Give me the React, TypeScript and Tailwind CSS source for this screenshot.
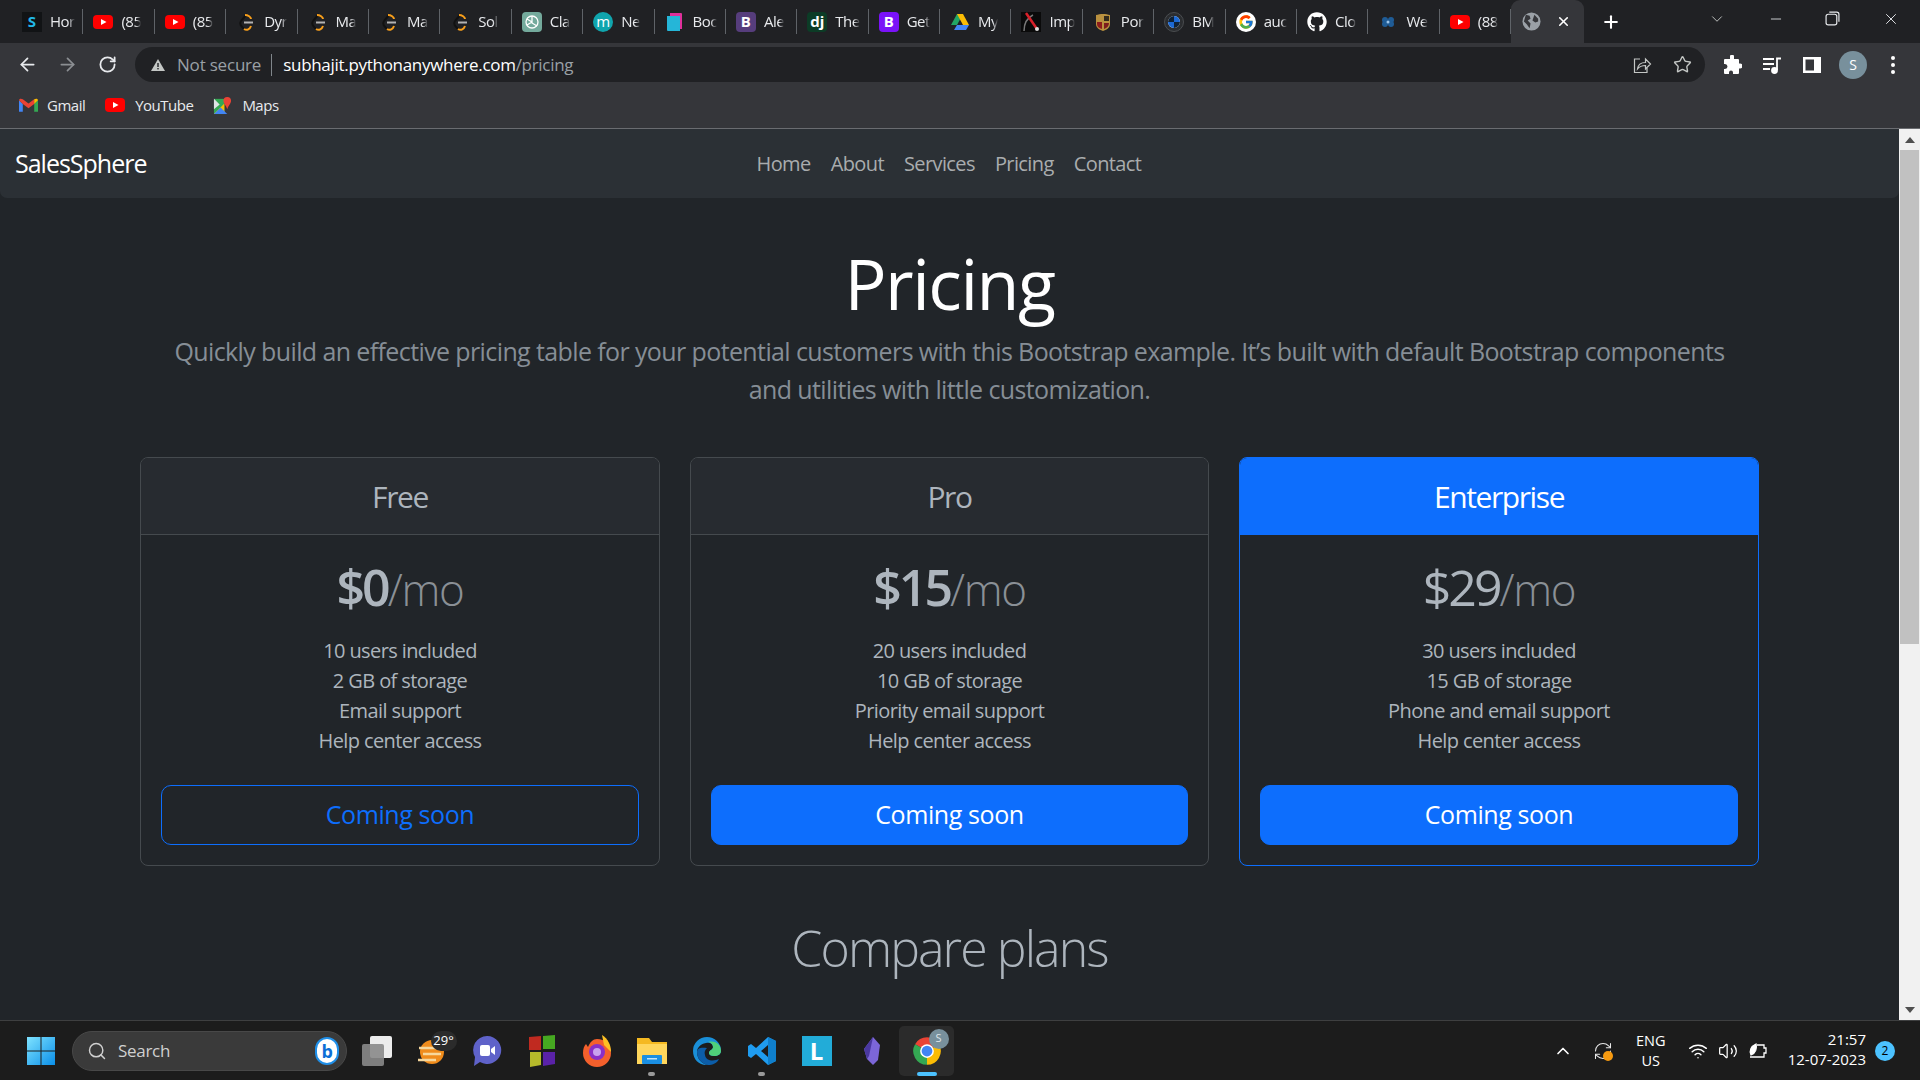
import React from 'react';
import { ArrowLeft, ArrowRight, ChevronDown, ChevronUp, Minus, Plus, RefreshCw, RotateCw, Search, Star, Volume2, Wifi, X } from 'lucide-react';
import { FaGithub } from 'react-icons/fa';
import { FcGoogle } from 'react-icons/fc';

function YouTubeIcon() {
  return (
    <svg viewBox="0 0 20 20" className="w-5 h-5 shrink-0">
      <rect x="0" y="3" width="20" height="14" rx="4" fill="#ff0000" />
      <path d="M8 7l5.500 3L8 13z" fill="#fff" />
    </svg>
  );
}

function CodeIcon() {
  return (
    <svg viewBox="0 0 20 20" fill="none" className="w-5 h-5 shrink-0">
      <path d="M11 2L5 9" stroke="#111" strokeWidth="2" />
      <path d="M5 9c-2 3 0 5 3 8" stroke="#111" strokeWidth="2" />
      <path d="M9 3c3 0 6 2 6 4" stroke="#f89f1b" strokeWidth="2" />
      <path d="M8 17c3 2 6 0 7-3" stroke="#f89f1b" strokeWidth="2" />
      <path d="M8 10.500h9" stroke="#b3b3b3" strokeWidth="2" />
    </svg>
  );
}

function LetterIcon({ letter, className }: { letter: string; className: string }) {
  return (
    <span className={`w-5 h-5 shrink-0 flex items-center justify-center font-bold text-[15px] leading-none ${className}`}>
      {letter}
    </span>
  );
}

const tabs: { icon: React.ReactNode; title: string }[] = [
  { icon: <LetterIcon letter="S" className="bg-[#111315] text-[#22b8e8] rounded-none" />, title: 'Hor' },
  { icon: <YouTubeIcon />, title: '(85' },
  { icon: <YouTubeIcon />, title: '(85' },
  { icon: <CodeIcon />, title: 'Dyr' },
  { icon: <CodeIcon />, title: 'Ma' },
  { icon: <CodeIcon />, title: 'Ma' },
  { icon: <CodeIcon />, title: 'Sol' },
  {
    icon: (
      <span className="w-5 h-5 shrink-0 rounded bg-[#74aa9c] flex items-center justify-center">
        <svg viewBox="0 0 16 16" fill="none" stroke="#fff" strokeWidth="1.300" className="w-4 h-4">
          <circle cx="8" cy="8" r="6" />
          <path d="M8 2v7l5 3M3 5l5 3M3 11l5-3" />
        </svg>
      </span>
    ),
    title: 'Cla',
  },
  { icon: <LetterIcon letter="m" className="bg-[#10a5ad] text-white rounded-full font-normal" />, title: 'Ne' },
  {
    icon: (
      <svg viewBox="0 0 20 20" className="w-5 h-5 shrink-0">
        <path d="M5 1h11a1 1 0 0 1 1 1v15H5z" fill="#e0309b" />
        <path d="M2 4h13v15H3a1 1 0 0 1-1-1z" fill="#25b6d8" />
      </svg>
    ),
    title: 'Boc',
  },
  { icon: <LetterIcon letter="B" className="bg-[#563d7c] text-white rounded" />, title: 'Ale' },
  { icon: <LetterIcon letter="dj" className="bg-[#0c3c26] text-white rounded-sm" />, title: 'The' },
  { icon: <LetterIcon letter="B" className="bg-[#7a12f8] text-white rounded" />, title: 'Get' },
  {
    icon: (
      <svg viewBox="0 0 20 20" className="w-5 h-5 shrink-0">
        <path d="M7 2h6L7 13H1z" fill="#22a565" />
        <path d="M13 2l6 11h-6L7 2z" fill="#fbbc04" />
        <path d="M4 18l3-5h12l-3 5z" fill="#4285f4" />
      </svg>
    ),
    title: 'My',
  },
  {
    icon: (
      <svg viewBox="0 0 20 20" className="w-5 h-5 shrink-0">
        <rect width="20" height="20" fill="#0a0a0a" />
        <path d="M3 19c0-8 3-13 9-16" stroke="#777" strokeWidth="1.500" fill="none" />
        <path d="M5 1l11 16" stroke="#d8202a" strokeWidth="2.500" />
        <circle cx="16" cy="17" r="2" fill="#ddd" />
      </svg>
    ),
    title: 'Imp',
  },
  {
    icon: (
      <svg viewBox="0 0 20 20" className="w-5 h-5 shrink-0">
        <path d="M3 3c4-1.500 10-1.500 14 0v9c0 4-4 6-7 7-3-1-7-3-7-7z" fill="#b9913f" />
        <path d="M4 10h5v7c-3-1-5-2-5-5z" fill="#8e1c1c" />
        <path d="M11 4h5v5h-5z" fill="#332a1c" />
        <path d="M11 11h5c0 3-2 5-5 6z" fill="#7c1d1d" />
      </svg>
    ),
    title: 'Por',
  },
  {
    icon: (
      <svg viewBox="0 0 20 20" className="w-5 h-5 shrink-0">
        <circle cx="10" cy="10" r="9.500" fill="#2b2d30" stroke="#4a4d50" />
        <circle cx="10" cy="10" r="6" fill="#fff" />
        <path d="M10 4a6 6 0 0 1 6 6h-6zM10 10v6a6 6 0 0 1-6-6z" fill="#1c69d4" />
        <path d="M10 4a6 6 0 0 0-6 6h6zM10 10v6a6 6 0 0 0 6-6z" fill="#0f2238" />
      </svg>
    ),
    title: 'BM',
  },
  { icon: <span className="w-5 h-5 shrink-0 rounded-full bg-white flex items-center justify-center"><FcGoogle className="w-4 h-4" /></span>, title: 'auc' },
  { icon: <FaGithub className="w-5 h-5 shrink-0 text-white" />, title: 'Clo' },
  {
    icon: (
      <svg viewBox="0 0 20 20" className="w-5 h-5 shrink-0" fill="#1f5c96">
        <circle cx="7" cy="8" r="3" />
        <circle cx="13" cy="8" r="3" />
        <circle cx="7" cy="12" r="3" />
        <circle cx="13" cy="12" r="3" />
        <circle cx="10" cy="10" r="1.500" fill="#9cc4e8" />
      </svg>
    ),
    title: 'We',
  },
  { icon: <YouTubeIcon />, title: '(88' },
];

function GlobeIcon() {
  return (
    <svg viewBox="0 0 20 20" className="w-[19px] h-[19px] shrink-0">
      <circle cx="10" cy="10" r="9.500" fill="#9aa0a6" />
      <path d="M4 3l4 1 1 3-3 2 3 3-1 5-3-4-3-3zM13 3l4 4v3l-3 1-3-2 1-3z" fill="#35363a" />
    </svg>
  );
}

function TabStrip() {
  return (
    <div className="h-[43px] bg-[#202124] flex items-end pl-3 shrink-0">
      {tabs.map((tab, i) => (
        <div key={i} className="w-[71.400px] h-[43px] flex items-center pl-[10px] relative">
          {tab.icon}
          <span className="ml-[8px] whitespace-nowrap text-[15px] text-[#e8eaed] tracking-[-0.5px] [mask-image:linear-gradient(to_right,black_75%,transparent)]">{tab.title}</span>
          <span className="absolute right-0 top-[9px] h-[25px] w-px bg-[#5f6368]" />
        </div>
      ))}
      <div className="w-[73px] h-[43px] bg-[#35363a] rounded-t-[9px] flex items-center pl-[11px]">
        <GlobeIcon />
        <X className="w-[15px] h-[15px] ml-[15px] text-white" strokeWidth={2.500} />
      </div>
      <div className="h-[43px] flex items-center ml-[17px]">
        <Plus className="w-5 h-5 text-white" strokeWidth={2.500} />
      </div>
      <div className="flex-1 h-[43px] flex items-start justify-end">
        <ChevronDown className="w-[18px] h-[18px] text-[#c4c7c5] mt-[10px] mr-[42px]" strokeWidth={1.250} />
        <Minus className="w-[16px] h-[16px] text-[#e8eaed] mt-[11px] mr-[41px]" strokeWidth={1.250} />
        <svg viewBox="0 0 14 14" fill="none" stroke="#e8eaed" strokeWidth="1.100" className="w-[15px] h-[15px] mt-[11px] mr-[42px]">
          <rect x="1" y="3" width="10" height="10" rx="2" />
          <path d="M4 1h7a2 2 0 0 1 2 2v7" />
        </svg>
        <X className="w-[18px] h-[18px] text-[#e8eaed] mt-[10px] mr-[20px]" strokeWidth={1.250} />
      </div>
    </div>
  );
}

function Toolbar() {
  return (
    <div className="h-[43px] bg-[#35363a] flex items-center shrink-0 text-[#e8eaed]">
      <ArrowLeft className="w-[21px] h-[21px] ml-[17px]" strokeWidth={2} />
      <ArrowRight className="w-[21px] h-[21px] ml-[19px] text-[#8b8e92]" strokeWidth={2} />
      <RotateCw className="w-[19px] h-[19px] ml-[20px]" strokeWidth={2.250} />
      <div className="ml-[18px] w-[1570px] h-[35px] rounded-full bg-[#202124] flex items-center">
        <svg viewBox="0 0 16 16" className="w-[16px] h-[16px] ml-[15px]" fill="#c4c7c5">
          <path d="M8 2l7 12H1z" />
          <rect x="7.300" y="6" width="1.400" height="4" fill="#202124" />
          <rect x="7.300" y="11" width="1.400" height="1.400" fill="#202124" />
        </svg>
        <span className="ml-[11px] text-[17px] tracking-[-0.2px] text-[#9aa0a6]">Not secure</span>
        <span className="ml-[10px] w-px h-[22px] bg-[#80868b]" />
        <span className="ml-[11px] text-[17px] tracking-[-0.3px] text-white">
          subhajit.pythonanywhere.com<span className="text-[#9aa0a6]">/pricing</span>
        </span>
        <svg viewBox="0 0 20 20" fill="none" stroke="#c4c7c5" strokeWidth="1.200" className="w-5 h-5 ml-auto">
          <path d="M8 4H2.500v13.500h12.500V13" />
          <path d="M5.500 14c.5-4 3.500-6.500 8-6.500V4l5 5-5 5v-3.500c-3.500 0-6 1-8 3.500z" />
        </svg>
        <Star className="w-[19px] h-[19px] ml-[21px] mr-[13px] text-[#c4c7c5]" strokeWidth={1.750} />
      </div>
      <svg viewBox="0 0 20 20" fill="#fff" className="w-5 h-5 ml-[17px]">
        <path d="M8 1.500a2 2 0 0 1 4 0V4h4a1 1 0 0 1 1 1v3.500h1a2.500 2.500 0 0 1 0 5h-1V18a1 1 0 0 1-1 1H11v-1.500a2 2 0 0 0-4 0V19H3a1 1 0 0 1-1-1v-4h1a2.500 2.500 0 0 0 0-5H2V5a1 1 0 0 1 1-1h5z" />
      </svg>
      <svg viewBox="0 0 20 20" fill="none" stroke="#fff" strokeWidth="1.800" className="w-5 h-5 ml-[20px]">
        <path d="M1 4h11M1 9h11M1 14h7" />
        <path d="M15 15V3.500h4" />
        <circle cx="12.500" cy="15.500" r="2.500" fill="#fff" />
      </svg>
      <svg viewBox="0 0 20 20" className="w-5 h-5 ml-[20px]" fill="#fff">
        <path d="M1 2h18v16H1zM3.500 4.500v11H12v-11z" fillRule="evenodd" />
      </svg>
      <span className="ml-[17px] w-[28px] h-[28px] rounded-full bg-[#78909c] flex items-center justify-center text-white text-[14px]">S</span>
      <span className="ml-[24px] flex flex-col gap-[3px]">
        <span className="w-1 h-1 rounded-full bg-white" />
        <span className="w-1 h-1 rounded-full bg-white" />
        <span className="w-1 h-1 rounded-full bg-white" />
      </span>
    </div>
  );
}

function BookmarksBar() {
  return (
    <div className="h-[43px] pb-[4px] bg-[#35363a] border-b border-b-[#6a6c70] flex items-center shrink-0 text-[15px] tracking-[-0.5px] text-[#e8eaed]">
      <svg viewBox="0 0 20 16" className="w-[19px] h-[16px] ml-[19px]">
        <path d="M0 3v12h4V7z" fill="#4285f4" />
        <path d="M16 7v8h4V3z" fill="#34a853" />
        <path d="M0 3l4 4 6 4.500L16 7V2L10 6.500 4 2C2 .7 0 1.500 0 3z" fill="#ea4335" />
        <path d="M16 2v5l4-4c0-1.500-2-2.300-4-1z" fill="#fbbc04" />
      </svg>
      <span className="ml-[9px]">Gmail</span>
      <span className="ml-[20px]"><YouTubeIcon /></span>
      <span className="ml-[10px]">YouTube</span>
      <svg viewBox="0 0 20 20" className="w-[19px] h-[19px] ml-[20px]">
        <path d="M1 3h11v16H1z" fill="#34a853" />
        <path d="M1 19L12 8v11z" fill="#fbbc04" />
        <path d="M1 19l7-7 7 7z" fill="#4285f4" />
        <path d="M1 3l6 6-6 5z" fill="#dfe3e6" />
        <path d="M15 1a4 4 0 0 1 4 4c0 3-3 5-4 9-1-4-4-6-4-9a4 4 0 0 1 4-4z" fill="#ea4335" />
      </svg>
      <span className="ml-[10px]">Maps</span>
    </div>
  );
}

type Plan = {
  name: string;
  price: string;
  features: string[];
  featured?: boolean;
  outline?: boolean;
  priceClass: string;
};

const plans: Plan[] = [
  { name: 'Free', price: '$0', features: ['10 users included', '2 GB of storage', 'Email support', 'Help center access'], outline: true, priceClass: 'font-semibold' },
  { name: 'Pro', price: '$15', features: ['20 users included', '10 GB of storage', 'Priority email support', 'Help center access'], priceClass: 'font-semibold' },
  { name: 'Enterprise', price: '$29', features: ['30 users included', '15 GB of storage', 'Phone and email support', 'Help center access'], featured: true, priceClass: 'font-medium' },
];

function PlanCard({ plan }: { plan: Plan }) {
  return (
    <div className={`w-[519.500px] h-[409px] rounded-[8px] border overflow-hidden flex flex-col ${plan.featured ? 'border-[#0d6efd]' : 'border-[#454a4e]'}`}>
      <div className={`h-[77px] shrink-0 flex items-center justify-center text-[30px] tracking-[-1.400px] border-b ${plan.featured ? 'bg-[#0d6efd] border-[#0d6efd] text-white' : 'bg-[#272b30] border-[#454a4e] text-[#adb5bd]'}`}>
        {plan.name}
      </div>
      <div className="flex-1 px-5 pt-[22px] text-center">
        <div className={`text-[50px] leading-[60px] tracking-[-3px] text-[#adb5bd] ${plan.priceClass}`}>
          {plan.price}<span className="text-[44px] tracking-[-1.300px] text-[#8a9096] font-light">/mo</span>
        </div>
        <ul className="mt-[17px] text-[20px] leading-[30px] tracking-[-0.6px] text-[#adb5bd]">
          {plan.features.map((f) => (
            <li key={f}>{f}</li>
          ))}
        </ul>
        <button className={`mt-[29px] w-full h-[60px] rounded-[10px] text-[25px] border ${plan.outline ? 'border-[#0d6efd] text-[#0d6efd]' : 'border-[#0d6efd] bg-[#0d6efd] text-white'}`}>
          Coming soon
        </button>
      </div>
    </div>
  );
}

function PricingPage() {
  return (
    <main className="flex-1 overflow-hidden bg-[#212529] font-['Open_Sans',sans-serif] tracking-[-0.025em]">
      <nav className="h-[69px] bg-[#2b3035] rounded-b-[7px] flex items-center px-[15px]">
        <span className="text-[25px] tracking-[-1px] text-white">SalesSphere</span>
        <div className="ml-[610px] flex gap-5 text-[20px] tracking-[-0.6px] text-[#a9acae]">
          <a>Home</a>
          <a>About</a>
          <a>Services</a>
          <a>Pricing</a>
          <a>Contact</a>
        </div>
      </nav>
      <div className="text-center pt-[43px]">
        <h1 className="text-[70px] leading-[84px] tracking-[-1.500px] text-white">Pricing</h1>
        <p className="mt-[8px] text-[25px] leading-[37.500px] tracking-[-0.610px] text-[#868e96]">
          Quickly build an effective pricing table for your potential customers with this Bootstrap example. It’s built with default Bootstrap components
          <br />
          and utilities with little customization.
        </p>
      </div>
      <div className="mt-[49px] flex justify-center gap-[30px]">
        {plans.map((plan) => (
          <PlanCard key={plan.name} plan={plan} />
        ))}
      </div>
      <h2 className="mt-[52px] text-center text-[50px] leading-[60px] tracking-[-1.900px] font-light text-[#adb5bd]">Compare plans</h2>
    </main>
  );
}

function Scrollbar() {
  return (
    <div className="w-[21px] bg-[#f1f1f1] flex flex-col items-stretch shrink-0">
      <div className="h-[21px] flex items-center justify-center">
        <span className="w-0 h-0 border-x-[5px] border-x-transparent border-b-[6px] border-b-[#505050]" />
      </div>
      <div className="h-[494px] mx-px bg-[#c1c1c1]" />
      <div className="flex-1" />
      <div className="h-[21px] flex items-center justify-center">
        <span className="w-0 h-0 border-x-[5px] border-x-transparent border-t-[6px] border-t-[#505050]" />
      </div>
    </div>
  );
}

function IconSlot({ children, active }: { children: React.ReactNode; active?: 'open' | 'focus' }) {
  return (
    <div className={`w-[55px] h-[50px] flex items-center justify-center relative ${active === 'focus' ? 'rounded-[5px] bg-[#2b2b2b]' : ''}`}>
      {children}
      {active === 'open' && <span className="absolute bottom-0 w-[7px] h-[4px] rounded-full bg-[#9a9a9a]" />}
      {active === 'focus' && <span className="absolute bottom-0 w-5 h-[4px] rounded-full bg-[#4cc2ff]" />}
    </div>
  );
}

function Taskbar() {
  return (
    <div className="h-[60px] bg-[#1c1c1c] border-t border-t-[#3e3f40] flex items-center shrink-0 font-['Open_Sans',sans-serif] text-white">
      <svg viewBox="0 0 30 30" className="w-[30px] h-[30px] ml-[26px]">
        <defs>
          <linearGradient id="win" x1="0" y1="0" x2="1" y2="1">
            <stop offset="0" stopColor="#7fe3ff" />
            <stop offset="1" stopColor="#0a8fe8" />
          </linearGradient>
        </defs>
        <path d="M1 1h13.500v13.500H1zM15.500 1H29v13.500H15.500zM1 15.500h13.500V29H1zM15.500 15.500H29V29H15.500z" fill="url(#win)" />
      </svg>
      <div className="ml-[16px] w-[275px] h-[40px] rounded-full bg-[#3a3a3a] border border-[#484848] flex items-center text-[#d0d0d0] text-[17px] tracking-[-0.3px]">
        <Search className="w-[20px] h-[20px] ml-[14px]" strokeWidth={1.750} />
        <span className="ml-[11px]">Search</span>
        <span className="ml-auto mr-[7px] w-[24px] h-[28px] rounded-full bg-white border-2 border-[#1f8fe8] flex items-center justify-center text-[#0c6fd6] font-bold text-[18px] leading-none">b</span>
      </div>
      <div className="ml-[2px] flex items-center">
        <IconSlot>
          <span className="relative w-[30px] h-[30px]">
            <span className="absolute right-0 top-0 w-[22px] h-[22px] rounded-[2px] bg-[#ececec]" />
            <span className="absolute left-0 bottom-0 w-[22px] h-[22px] rounded-[2px] bg-[#8a8a8a]/90" />
          </span>
        </IconSlot>
        <IconSlot>
          <span className="relative w-[30px] h-[30px]">
            <svg viewBox="0 0 30 30" className="w-[30px] h-[30px]">
              <circle cx="15" cy="16" r="12" fill="#f08c1c" />
              <path d="M2 12h24M6 18h18M1 24h18" stroke="#f6d79c" strokeWidth="2.500" />
            </svg>
            <span className="absolute -right-[10px] -top-[5px] w-[26px] h-[20px] rounded-full bg-[#2b2b2b] flex items-center justify-center text-[13px] text-white">29°</span>
          </span>
        </IconSlot>
        <IconSlot>
          <svg viewBox="0 0 30 32" className="w-[30px] h-[32px]">
            <path d="M15 1a14 14 0 1 1-7 26l-6 4 1-9A14 14 0 0 1 15 1z" fill="#5f62c9" />
            <rect x="8" y="10" width="10" height="11" rx="2" fill="#fff" />
            <path d="M19 14l4-3v9l-4-3z" fill="#fff" />
          </svg>
        </IconSlot>
        <IconSlot>
          <svg viewBox="0 0 28 32" className="w-[28px] h-[32px]">
            <path d="M1 2l12-1v14H1z" fill="#c02a20" />
            <path d="M15 1l12-1v14H15z" fill="#46a821" />
            <path d="M2 17h11v13l-11 2z" fill="#b5b92b" />
            <path d="M15 17h12v12l-12 2z" fill="#5a22a8" />
          </svg>
        </IconSlot>
        <IconSlot>
          <svg viewBox="0 0 30 32" className="w-[30px] h-[32px]">
            <path d="M15 4c8 0 14 5 14 14a14 14 0 0 1-28 0c0-4 1-7 3-9l2 3c2-5 5-8 9-8z" fill="#f4602c" />
            <path d="M20 0c6 4 9 10 9 17l-7-7z" fill="#ffc123" />
            <circle cx="15" cy="17" r="8" fill="#8a2fc7" />
            <circle cx="15" cy="17" r="4" fill="#c9a1ee" />
          </svg>
        </IconSlot>
        <IconSlot active="open">
          <svg viewBox="0 0 32 30" className="w-[32px] h-[30px]">
            <path d="M1 2h12l3 4h15v22H1z" fill="#f5b921" />
            <path d="M1 8h30v20H1z" fill="#ffd65c" />
            <rect x="6" y="19" width="20" height="9" rx="1" fill="#1a8fe3" />
            <rect x="11" y="22" width="10" height="1.500" fill="#bfe3fb" />
          </svg>
        </IconSlot>
        <IconSlot>
          <svg viewBox="0 0 30 30" className="w-[30px] h-[30px]">
            <path d="M15 1a14 14 0 0 1 14 14c0 3-3 5-7 5-3 0-5-1-5-3 0-3 4-3 4-6 0-3-3-5-7-4C8 8 5 12 5 16c0 7 5 12 11 13C8 30 1 24 1 15A14 14 0 0 1 15 1z" fill="#1a8fd8" />
            <path d="M29 15c0 3-3 5-7 5-3 0-5-1-5-3 0-3 4-3 4-6 0-3-3-5-5-5 8-2 13 3 13 9z" fill="#4fd07a" />
            <path d="M5 16c0 7 5 12 11 13 5 0 9-2 11-6-4 2-13 3-14-4-1-3 0-5 2-7C9 11 5 12 5 16z" fill="#0c5da8" />
          </svg>
        </IconSlot>
        <IconSlot active="open">
          <svg viewBox="0 0 30 30" className="w-[30px] h-[30px]">
            <path d="M21 1l8 4v20l-8 4-12-11-5 4-3-2V10l3-2 5 4zM21 9l-7 6 7 6z" fill="#1f9cf0" fillRule="evenodd" />
            <path d="M21 1l8 4v20l-8 4z" fill="#0f7fcc" />
          </svg>
        </IconSlot>
        <IconSlot>
          <span className="w-[30px] h-[30px] bg-[#22acd8] flex items-center justify-center text-white font-bold text-[24px] leading-none">L</span>
        </IconSlot>
        <IconSlot>
          <svg viewBox="0 0 18 30" className="w-[18px] h-[30px]">
            <path d="M10 1l7 8-2 15-5 5-6-6L1 13z" fill="#7c66d8" />
            <path d="M10 1L1 13l3 10 2-3z" fill="#4a38a0" />
          </svg>
        </IconSlot>
        <IconSlot active="focus">
          <span className="relative w-[30px] h-[30px]">
            <svg viewBox="0 0 24 24" className="w-[30px] h-[30px]">
              <path d="M12 12L2.470 6.500A11 11 0 0 1 21.530 6.500z" fill="#ea4335" />
              <path d="M12 12L21.530 6.500A11 11 0 0 1 12 23z" fill="#fbbc04" />
              <path d="M12 12V23A11 11 0 0 1 2.470 6.500z" fill="#34a853" />
              <circle cx="12" cy="12" r="5.500" fill="#fff" />
              <circle cx="12" cy="12" r="4.300" fill="#4285f4" />
            </svg>
            <span className="absolute -right-[7px] -top-[7px] w-[20px] h-[20px] rounded-full bg-[#78909c] flex items-center justify-center text-[11px] text-[#dfe5e8]">S</span>
          </span>
        </IconSlot>
      </div>
      <div className="ml-auto flex items-center">
        <ChevronUp className="w-[20px] h-[20px]" strokeWidth={2} />
        <span className="relative ml-[20px] w-[20px] h-[20px]">
          <RefreshCw className="w-[20px] h-[20px] text-[#e8e8e8]" strokeWidth={1.250} />
          <span className="absolute right-0 bottom-0 w-[10px] h-[10px] rounded-full bg-[#f79a10]" />
        </span>
        <div className="ml-[16px] w-[44px] text-center text-[14.500px] leading-[20px]">
          <div>ENG</div>
          <div>US</div>
        </div>
        <Wifi className="ml-[15px] w-[20px] h-[20px]" strokeWidth={1.750} />
        <Volume2 className="ml-[10px] w-[20px] h-[20px]" strokeWidth={1.500} />
        <svg viewBox="0 0 20 20" fill="none" stroke="#fff" strokeWidth="1.300" className="ml-[10px] w-[20px] h-[20px]">
          <path d="M9 4h7v3h2v5h-2v4H2" />
          <path d="M3 14c-2-4 0-9 5-11 1 4 0 9-5 11z" fill="#fff" />
        </svg>
        <div className="ml-[20px] pb-[4px] text-right text-[15px] leading-[20px]">
          <div>21:57</div>
          <div>12-07-2023</div>
        </div>
        <span className="ml-[9px] mr-[25px] w-[20px] h-[20px] rounded-full bg-[#4cc2ff] flex items-center justify-center text-[12px] text-black">2</span>
      </div>
    </div>
  );
}

export default function App() {
  return (
    <div className="w-screen h-screen overflow-hidden flex flex-col font-['Open_Sans',sans-serif]">
      <TabStrip />
      <Toolbar />
      <BookmarksBar />
      <div className="flex-1 min-h-0 flex">
        <PricingPage />
        <Scrollbar />
      </div>
      <Taskbar />
    </div>
  );
}
